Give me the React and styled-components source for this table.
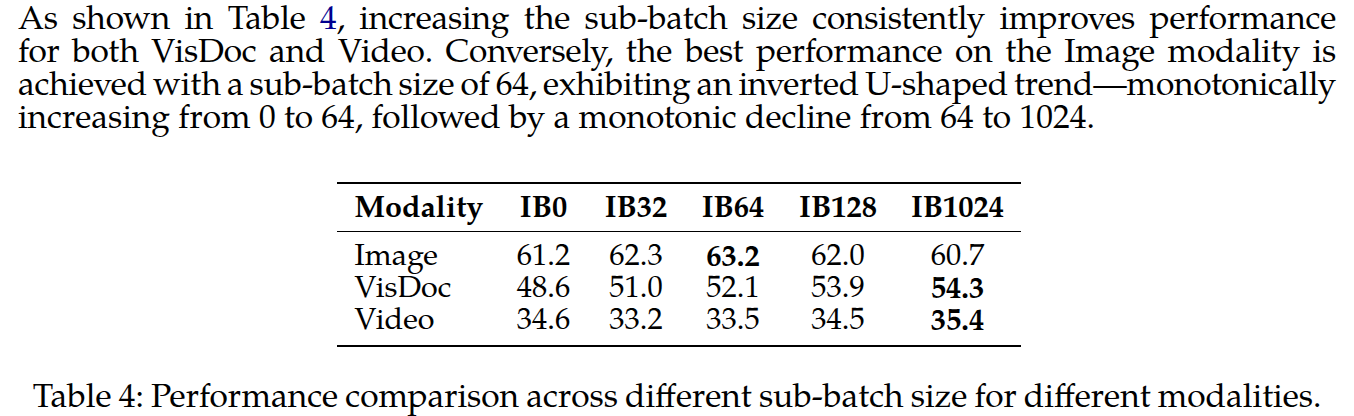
import React from 'react';
import styled, { createGlobalStyle } from 'styled-components';

const GlobalStyle = createGlobalStyle`
    body {
        margin: 0;
        background: #ffffff;
        color: #000000;
    }
`;

const rows = [
    { name: 'Image', values: ['61.2', '62.3', '63.2', '62.0', '60.7'], best: 2 },
    { name: 'VisDoc', values: ['48.6', '51.0', '52.1', '53.9', '54.3'], best: 4 },
    { name: 'Video', values: ['34.6', '33.2', '33.5', '34.5', '35.4'], best: 4 },
];

const columns = [
    { label: 'Modality', width: 163, align: 'left' },
    { label: 'IB0', width: 88 },
    { label: 'IB32', width: 97 },
    { label: 'IB64', width: 97 },
    { label: 'IB128', width: 113 },
    { label: 'IB1024', width: 126 },
];

const App = () => {
    const lines = [
        <>As shown in Table <Ref>4</Ref>, increasing the sub-batch size consistently improves performance</>,
        <>for both VisDoc and Video. Conversely, the best performance on the Image modality is</>,
        <>achieved with a sub-batch size of 64, exhibiting an inverted U-shaped trend—monotonically</>,
        <>increasing from 0 to 64, followed by a monotonic decline from 64 to 1024.</>,
    ];

    return (
        <Page>
            <GlobalStyle />
            <Paragraph>
                {lines.map((line, i) => (
                    <Line key={i} $last={i === lines.length - 1}>{line}</Line>
                ))}
            </Paragraph>

            <Figure>
                <Table>
                    <colgroup>
                        {columns.map(col => <Col key={col.label} $width={col.width} />)}
                    </colgroup>
                    <thead>
                        <tr>
                            {columns.map(col => (
                                <HeadCell key={col.label} $align={col.align}>{col.label}</HeadCell>
                            ))}
                        </tr>
                    </thead>
                    <tbody>
                        {rows.map(row => (
                            <tr key={row.name}>
                                <Cell $align="left">{row.name}</Cell>
                                {row.values.map((v, i) => (
                                    <Cell key={i} $bold={i === row.best}>{v}</Cell>
                                ))}
                            </tr>
                        ))}
                    </tbody>
                </Table>
                <Caption>Table 4: Performance comparison across different sub-batch size for different modalities.</Caption>
            </Figure>
        </Page>
    );
};

const Page = styled.div`
    width: 1354px;
    box-sizing: border-box;
    padding: 5px 18px 0 18px;
    font-family: "TeX Gyre Pagella", "Liberation Serif", serif;
    font-size: 33.5px;
    line-height: 33px;
    color: #000;
`;

const Paragraph = styled.p`
    margin: 0;
`;

/* justified lines are squeezed a little, like TeX shrinking its glue */
const Line = styled.span`
    display: block;
    white-space: nowrap;
    letter-spacing: ${p => (p.$last ? '0' : '-0.2px')};
    word-spacing: ${p => (p.$last ? '0' : '-3px')};
    text-align: ${p => (p.$last ? 'left' : 'justify')};
    text-align-last: ${p => (p.$last ? 'left' : 'justify')};
`;

const Ref = styled.span`
    color: #00008f;
`;

const Figure = styled.figure`
    margin: 45px 0 0 0;
    display: flex;
    flex-direction: column;
    align-items: center;
`;

const Table = styled.table`
    width: 684px;
    margin-left: 3px;
    table-layout: fixed;
    border-collapse: collapse;
    border-top: 2px solid #000;
    border-bottom: 2px solid #000;
    font-family: inherit;
    font-size: 30.5px;
    line-height: 32px;

    thead tr {
        border-bottom: 1px solid #000;
    }
    tbody tr:first-child td {
        padding-top: 10.5px;
    }
    tbody tr:last-child td {
        padding-bottom: 6.5px;
    }
`;

const Col = styled.col`
    width: ${p => p.$width}px;
`;

const HeadCell = styled.th`
    padding: 10px 0 5px ${p => (p.$align === 'left' ? '18px' : '0')};
    text-align: ${p => p.$align || 'center'};
    font-weight: bold;
`;

const Cell = styled.td`
    padding: 0 0 0 ${p => (p.$align === 'left' ? '18px' : '0')};
    text-align: ${p => p.$align || 'center'};
    font-weight: ${p => (p.$bold ? 'bold' : 'normal')};
`;

const Caption = styled.figcaption`
    margin-top: 36px;
    word-spacing: -1.2px;
`;

export default App;
